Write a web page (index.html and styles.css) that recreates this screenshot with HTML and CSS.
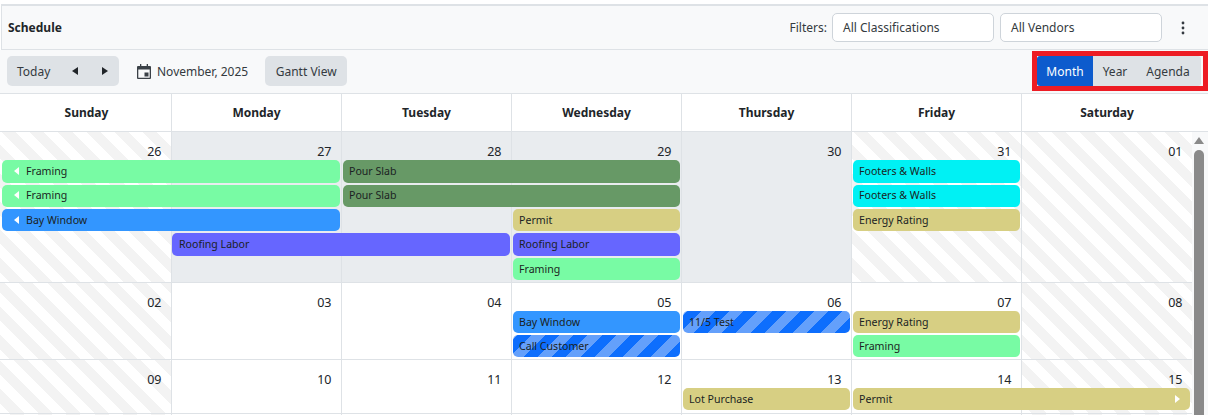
FILE: index.html
```html
<!DOCTYPE html>
<html lang="en">
<head>
<meta charset="utf-8">
<title>Schedule</title>
<link rel="stylesheet" href="styles.css">
</head>
<body>
<div class="page">
  <header class="titlebar">
    <h1 class="title">Schedule</h1>
    <div class="filters">
      <span class="filters-label">Filters:</span>
      <div class="select">All Classifications</div>
      <div class="select">All Vendors</div>
      <svg class="kebab" width="4" height="14" viewBox="0 0 4 14"><circle cx="2" cy="2" r="1.4"/><circle cx="2" cy="7" r="1.4"/><circle cx="2" cy="12" r="1.4"/></svg>
    </div>
  </header>
  <div class="toolbar">
    <div class="btn-group nav-group">
      <span class="btn-text">Today</span>
      <svg class="nav-arrow" width="7" height="8" viewBox="0 0 7 8"><path d="M6 0v8L0 4z"/></svg>
      <svg class="nav-arrow" width="7" height="8" viewBox="0 0 7 8"><path d="M1 0v8l6-4z"/></svg>
    </div>
    <div class="month-label">
      <svg class="cal-icon" width="14" height="15" viewBox="0 0 14 15"><path fill-rule="evenodd" d="M3 0h1.300v2h5.400V0H11v2h2a1 1 0 0 1 1 1v11a1 1 0 0 1-1 1H1a1 1 0 0 1-1-1V3a1 1 0 0 1 1-1h2zM1.300 5.500v8.200h11.400V5.500z"/><rect x="7.500" y="8.500" width="4" height="4"/></svg>
      <span>November, 2025</span>
    </div>
    <div class="btn-group gantt">Gantt View</div>
    <div class="highlight">
      <div class="view-group">
        <span class="view view-active">Month</span>
        <span class="view view-year">Year</span>
        <span class="view view-agenda">Agenda</span>
      </div>
    </div>
  </div>
  <div class="calendar">
    <div class="weekdays">
      <div class="weekday">Sunday</div>
      <div class="weekday">Monday</div>
      <div class="weekday">Tuesday</div>
      <div class="weekday">Wednesday</div>
      <div class="weekday">Thursday</div>
      <div class="weekday">Friday</div>
      <div class="weekday">Saturday</div>
    </div>
    <div class="scroll-area">
      <div class="weeks">
        <section class="week week-5">
          <div class="day c1 off">26</div>
          <div class="day c2 past">27</div>
          <div class="day c3 past">28</div>
          <div class="day c4 past">29</div>
          <div class="day c5 past">30</div>
          <div class="day c6 off">31</div>
          <div class="day c7 off">01</div>
          <div class="event green cont r1 s1-2"><i class="tri-left"></i>Framing</div>
          <div class="event olive r1 s3-4">Pour Slab</div>
          <div class="event cyan r1 s6">Footers &amp; Walls</div>
          <div class="event green cont r2 s1-2"><i class="tri-left"></i>Framing</div>
          <div class="event olive r2 s3-4">Pour Slab</div>
          <div class="event cyan r2 s6">Footers &amp; Walls</div>
          <div class="event blue cont r3 s1-2"><i class="tri-left"></i>Bay Window</div>
          <div class="event khaki r3 s4">Permit</div>
          <div class="event khaki r3 s6">Energy Rating</div>
          <div class="event violet flush wide r4 s2-3">Roofing Labor</div>
          <div class="event violet r4 s4">Roofing Labor</div>
          <div class="event green r5 s4">Framing</div>
        </section>
        <section class="week week-2">
          <div class="day c1 off">02</div>
          <div class="day c2">03</div>
          <div class="day c3">04</div>
          <div class="day c4">05</div>
          <div class="day c5">06</div>
          <div class="day c6">07</div>
          <div class="day c7 off">08</div>
          <div class="event blue r1 s4">Bay Window</div>
          <div class="event hatch r1 s5">11/5 Test</div>
          <div class="event khaki r1 s6">Energy Rating</div>
          <div class="event hatch r2 s4">Call Customer</div>
          <div class="event green r2 s6">Framing</div>
        </section>
        <section class="week week-1">
          <div class="day c1 off">09</div>
          <div class="day c2">10</div>
          <div class="day c3">11</div>
          <div class="day c4">12</div>
          <div class="day c5">13</div>
          <div class="day c6">14</div>
          <div class="day c7 off">15</div>
          <div class="event khaki r1 s5">Lot Purchase</div>
          <div class="event khaki r1 s6-7 end">Permit<i class="tri-right"></i></div>
        </section>
        <section class="week week-last">
          <div class="day c1 off"></div>
          <div class="day c2"></div>
          <div class="day c3"></div>
          <div class="day c4"></div>
          <div class="day c5"></div>
          <div class="day c6"></div>
          <div class="day c7 off"></div>
        </section>
      </div>
      <div class="scrollbar">
        <i class="scroll-up"></i>
        <div class="scroll-thumb"></div>
      </div>
    </div>
  </div>
</div>
</body>
</html>
```

FILE: styles.css
```css
* { box-sizing: border-box; }
html, body { margin: 0; height: 415px; overflow: hidden; background: #fff; }
body {
  font-family: "Noto Sans", "Open Sans", "Liberation Sans", sans-serif;
  font-size: 12px;
  color: #212529;
}
.page { padding-top: 4px; }

.titlebar {
  height: 46px;
  margin-left: 1px;
  display: flex;
  align-items: center;
  justify-content: space-between;
  padding: 0 23px 0 6px;
  background: #f8f9fa;
  border-top: 2px solid #dee2e6;
  border-left: 1px solid #dee2e6;
  border-bottom: 1px solid #dee2e6;
}
.title { margin: 0; font-size: 12px; font-weight: 700; }
.filters { display: flex; align-items: center; }
.filters-label { margin-right: 5px; color: #343a40; }
.select {
  width: 162px;
  height: 29px;
  margin-right: 6px;
  padding: 0 10px;
  display: flex;
  align-items: center;
  background: #fff;
  border: 1px solid #ced4da;
  border-radius: 5px;
  color: #343a40;
}
.kebab { margin-left: 13px; fill: #343a40; }

.toolbar {
  height: 44px;
  padding: 6px 0 0 7px;
  display: flex;
  align-items: flex-start;
  background: #f8f9fa;
  border-bottom: 1px solid #dee2e6;
}
.btn-group {
  height: 30px;
  display: flex;
  align-items: center;
  background: #dee2e6;
  border-radius: 5px;
  color: #343a40;
}
.nav-group { width: 112px; padding-left: 10px; }
.btn-text { width: 55px; flex: none; }
.nav-arrow { flex: none; fill: #212529; }
.nav-arrow + .nav-arrow { margin-left: 22px; }
.month-label { margin-left: 18px; height: 30px; display: flex; align-items: center; color: #343a40; }
.cal-icon { fill: #3b4147; margin-right: 6px; }
.gantt { margin-left: 17px; width: 82px; justify-content: center; }

.highlight {
  margin-left: auto;
  margin-top: -5px;
  width: 176px;
  height: 40px;
  border: 5px solid #ed1c24;
  background: #f8f9fa;
}
.view-group {
  width: 164px;
  height: 100%;
  display: flex;
  align-items: center;
  background: #dee2e6;
  border-radius: 3px;
  color: #343a40;
}
.view { height: 100%; display: flex; align-items: center; justify-content: center; }
.view-active { width: 56px; background: #0d5bcd; color: #fff; border-radius: 3px 0 0 3px; }
.view-year { width: 44px; }
.view-agenda { width: 62px; }

.weekdays {
  display: grid;
  grid-template-columns: repeat(7, 170px);
  height: 38px;
  padding-left: 2px;
  background: #fff;
  border-bottom: 1px solid #dee2e6;
}
.weekday {
  display: flex;
  align-items: center;
  justify-content: center;
  font-weight: 700;
  border-right: 1px solid #dee2e6;
}
.weekday:last-child { border-right: 0; }

.scroll-area { display: flex; height: 283px; overflow: hidden; }
.weeks { width: 1192px; flex: none; }
.week {
  display: grid;
  grid-template-columns: repeat(7, 170px);
  padding-left: 2px;
  border-bottom: 1px solid #dee2e6;
}
.week-5 { height: 151px; grid-template-rows: 28.2px repeat(5, 1fr); }
.week-2 { height: 77px; grid-template-rows: 28px repeat(2, 1fr); }
.week-1 { height: 53.5px; grid-template-rows: 28px 1fr; }
.week-last { height: 30px; grid-template-rows: 1fr; }

.day {
  grid-row: 1 / -1;
  padding: 11px 9.5px 0 0;
  text-align: right;
  font-size: 12.5px;
  line-height: 17px;
  border-right: 1px solid #dee2e6;
}
.c1 { grid-column: 1; margin-left: -2px; }
.c2 { grid-column: 2; }
.c3 { grid-column: 3; }
.c4 { grid-column: 4; }
.c5 { grid-column: 5; }
.c6 { grid-column: 6; }
.c7 { grid-column: 7; border-right: 0; }
.past { background: #e9ecef; }
.off {
  background: repeating-linear-gradient(45deg, #fff 0 7px, #f3f3f3 7px 17px, #fff 17px 20px);
}

.event {
  height: 22.4px;
  margin: 0 2px 0 1px;
  padding: 0 0 0.5px 6px;
  display: flex;
  align-items: center;
  font-size: 10.6px;
  border-radius: 5px;
  color: #1b1f23;
  z-index: 1;
  white-space: nowrap;
}
.cont { margin-left: 0; padding-left: 12px; }
.flush { margin-left: 0; }
.wide { padding-left: 7px; }
.end { justify-content: space-between; padding-right: 10px; }

.r1 { grid-row: 2; }
.r2 { grid-row: 3; }
.r3 { grid-row: 4; }
.r4 { grid-row: 5; }
.r5 { grid-row: 6; }
.s1-2 { grid-column: 1 / 3; }
.s2-3 { grid-column: 2 / 4; }
.s3-4 { grid-column: 3 / 5; }
.s4 { grid-column: 4; }
.s5 { grid-column: 5; }
.s6 { grid-column: 6; }
.s6-7 { grid-column: 6 / 8; }

.green { background: #78fba4; }
.olive { background: #679966; }
.cyan { background: #00f1f4; }
.blue { background: #3396ff; }
.khaki { background: #d7cf83; }
.violet { background: #6666ff; }
.hatch {
  background: repeating-linear-gradient(135deg, #64a0fb 0 3px, #0d6efd 3px 13px, #64a0fb 13px 20px);
}

.tri-left, .tri-right { display: block; width: 0; height: 0; border-style: solid; }
.tri-left { margin-right: 7px; border-width: 4px 5px 4px 0; border-color: transparent #fff transparent transparent; }
.tri-right { border-width: 4px 0 4px 5px; border-color: transparent transparent transparent #fff; }

.scrollbar { flex: 1; padding: 0 5px 0 2px; display: flex; flex-direction: column; background: #f8f9fa; }
.scroll-up {
  display: block;
  width: 0;
  height: 0;
  margin: 5px auto 0;
  border-style: solid;
  border-width: 0 5px 7px 5px;
  border-color: transparent transparent #8a8a8a transparent;
}
.scroll-thumb { margin-top: 6px; flex: 1; background: #8a8a8a; border-radius: 5px 5px 0 0; }
```
